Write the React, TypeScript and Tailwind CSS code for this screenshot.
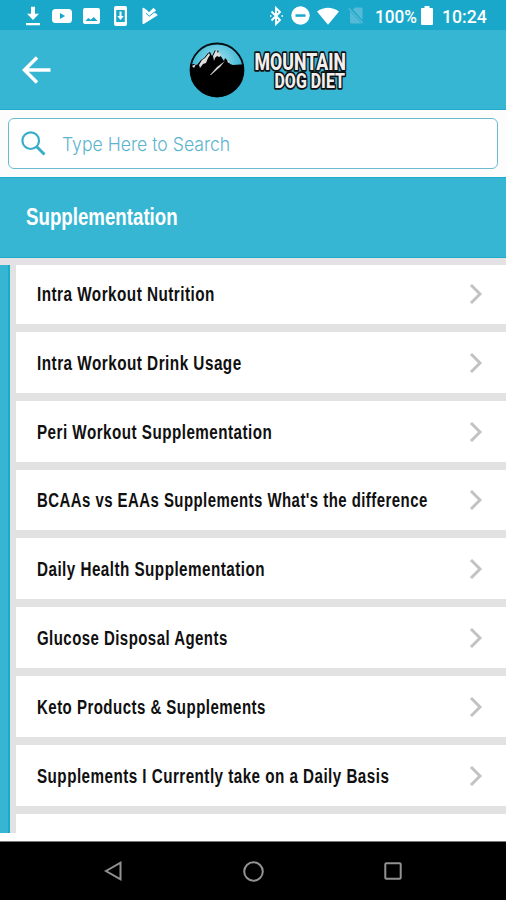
import { useLayoutEffect, useRef } from "react";

const topics = [
  { label: "Intra Workout Nutrition", width: 178 },
  { label: "Intra Workout Drink Usage", width: 205 },
  { label: "Peri Workout Supplementation", width: 235 },
  { label: "BCAAs vs EAAs Supplements What's the difference", width: 391 },
  { label: "Daily Health Supplementation", width: 228 },
  { label: "Glucose Disposal Agents", width: 190.5 },
  { label: "Keto Products & Supplements", width: 229 },
  { label: "Supplements I Currently take on a Daily Basis", width: 352.5 },
];

/** Text condensed or widened horizontally to a fixed width. */
function FitText({ text, width, className = "" }: { text: string; width: number; className?: string }) {
  const ref = useRef<HTMLSpanElement>(null);
  useLayoutEffect(() => {
    const el = ref.current;
    if (el) el.style.transform = `scaleX(${width / el.offsetWidth})`;
  }, [width, text]);
  return (
    <span className="block shrink-0" style={{ width }}>
      <span ref={ref} className={`inline-block origin-left whitespace-nowrap ${className}`}>
        {text}
      </span>
    </span>
  );
}

function StatusBar() {
  return (
    <div className="flex h-[30px] shrink-0 items-center bg-[#1aa8ca] pt-px text-white">
      <svg className="ml-[26px] h-5 w-[14px]" viewBox="0 0 14 20" fill="currentColor">
        <path d="M5 .8h4v7h4L7 14 1 7.800h4zM0 17h14v2.300H0z" />
      </svg>
      <svg className="ml-3 h-[14px] w-5" viewBox="0 0 20 14">
        <rect width="20" height="14" rx="3.500" fill="currentColor" />
        <path d="M8 4l5.200 3L8 10z" fill="#1aa8ca" />
      </svg>
      <svg className="ml-[11px] h-4 w-[17px]" viewBox="0 0 17 16">
        <rect width="17" height="16" rx="2" fill="currentColor" />
        <path d="M2.500 13l2.700-3 2.600 1.800 3-2.800 3.700 4z" fill="#1aa8ca" />
      </svg>
      <svg className="ml-[14px] h-5 w-[13px]" viewBox="0 0 13 20">
        <rect width="13" height="20" rx="2" fill="currentColor" />
        <path d="M2.200 4h8.600v12H2.200z" fill="#1aa8ca" />
        <path d="M5.500 5.500h2v4.500h2.300l-3.300 4-3.300-4h2.300z" fill="currentColor" />
      </svg>
      <svg className="ml-[15px] h-[18px] w-4" viewBox="0 0 16 18">
        <path d="M.5 1.500Q.5.200 2 1l3 2.200 2 2.100L11.500.8 14 3.200 11.800 6q4.500.7 3.500 2.500L2.200 16.800Q.5 17.500.5 16z" fill="currentColor" />
        <path d="M3.800 6l3.400 3.300L12.500 5" fill="none" stroke="#1aa8ca" strokeWidth="1" />
      </svg>
      <svg className="ml-[112px] h-5 w-[13px]" viewBox="0 0 13 20" fill="none" stroke="currentColor" strokeWidth="1.900">
        <path d="M1.500 5.500l8.500 8.500-4 4V2l4 4-8.500 8.500M.5 9.200v1.600M12.300 9.200v1.600" />
      </svg>
      <svg className="ml-2 h-[19px] w-[19px]" viewBox="0 0 19 19">
        <circle cx="9.500" cy="9.500" r="9.200" fill="currentColor" />
        <path d="M4.500 8.300h10v2.500h-10z" fill="#1aa8ca" />
      </svg>
      <svg className="ml-[7px] h-[18px] w-[22px]" viewBox="0 0 22 18" fill="currentColor">
        <path d="M0 4.500Q11-3 22 4.500L11 17.800z" />
      </svg>
      <svg className="ml-[9px] h-[17px] w-4" viewBox="0 0 16 17">
        <path d="M5 2.500L7 .5h6q1.500 0 1.500 1.500v11zM2 4.500L13.500 16.500h-10Q2 16.500 2 15z" fill="#55bad7" />
        <path d="M.8 1.500l14 14.500" stroke="#55bad7" strokeWidth="1.500" />
      </svg>
      <div className="ml-[11px] flex pt-[2px] font-['Roboto',sans-serif] text-[18px] leading-5 font-medium">
        <FitText text="100%" width={42} />
      </div>
      <svg className="ml-[4px] h-[19px] w-3" viewBox="0 0 12 19" fill="currentColor">
        <path d="M3.500 0h5v2H11q1 0 1 1v15q0 1-1 1H1q-1 0-1-1V3q0-1 1-1h2.500z" />
      </svg>
      <div className="ml-[9px] flex pt-[2px] font-['Roboto',sans-serif] text-[18px] leading-5 font-medium">
        <FitText text="10:24" width={45} />
      </div>
    </div>
  );
}

function Logo() {
  return (
    <svg className="ml-[138px] h-[60px] w-[162px]" viewBox="0 0 162 60">
      <defs>
        <clipPath id="badge">
          <circle cx="28" cy="30" r="27" />
        </clipPath>
        <radialGradient id="sky" cx=".5" cy=".35" r=".5">
          <stop offset="0" stopColor="#a6e2f0" />
          <stop offset="1" stopColor="#35b5d2" />
        </radialGradient>
      </defs>
      <circle cx="28" cy="30" r="26.500" fill="url(#sky)" stroke="#061014" strokeWidth="1.800" />
      <g clipPath="url(#badge)">
        <path d="M0 25l5-1 3 1 4-5 3-2 4-5 2-1 2 4 3-6 2 2 1-2 2 5 4 6 1-3 3 3 2 3 3 1 13-1v40H0z" fill="#000" />
        <path d="M3 26l4-2-2 4zM10 25l3-5 3-2 4-5 1 2-2 3-2 5-3 1-3 4zM24 16l3-6 2 3 1-2 2 5-2 1-2-1-2 2-1 3zM38 20l3 2-2 1z" fill="#ddd" />
        <path d="M21 35l7-8 8-6-5 6-9 8z" fill="#d3d3d3" />
      </g>
      <g
        fontFamily="Roboto, 'Liberation Sans', sans-serif"
        fontWeight="800"
        fill="#f0f0f0"
        stroke="#111"
        strokeWidth="3.600"
        strokeLinejoin="round"
        style={{ paintOrder: "stroke" }}
      >
        <text x="65.500" y="30.300" fontSize="23.500" textLength="91.500" lengthAdjust="spacingAndGlyphs">MOUNTAIN</text>
        <text x="85.500" y="48" fontSize="20.500" textLength="70.500" lengthAdjust="spacingAndGlyphs">DOG DIET</text>
      </g>
    </svg>
  );
}

function Chevron() {
  return (
    <svg className="h-5 w-[14px]" viewBox="0 0 14 20" fill="none" stroke="#c2c2c2" strokeWidth="2.900">
      <path d="M2 1l9 9-9 9" />
    </svg>
  );
}

export default function App() {
  return (
    <div className="flex h-[900px] w-[506px] flex-col overflow-hidden bg-white font-['Liberation_Sans',Arial,sans-serif]">
      <StatusBar />

      <header className="flex h-20 shrink-0 items-center border-b border-[#1fabc9] bg-[#37b6d3]">
        <svg className="ml-[22px] h-7 w-[29px]" viewBox="0 0 29 28" fill="none" stroke="#fff" strokeWidth="3.500">
          <path d="M15 1.500L2.500 14 15 26.500M3 14h25.500" />
        </svg>
        <Logo />
      </header>

      <div className="h-[67px] shrink-0 bg-[#fcfcfc] px-2 pt-2">
        <div className="flex h-[51px] items-center rounded-[6px] border-[1.5px] border-[#6abbd0] bg-white">
          <svg className="ml-3 h-[25px] w-[25px]" viewBox="0 0 25 25" fill="none" stroke="#37adc8" strokeWidth="2.200">
            <circle cx="9.700" cy="9.700" r="8.300" />
            <path d="M15.500 15.500l8 8" strokeWidth="3" />
          </svg>
          <div className="ml-4 pt-[3px] font-['Inter',sans-serif] text-[19px] leading-6 font-light text-[#5cb4cd]">
            <FitText text="Type Here to Search" width={168} />
          </div>
        </div>
      </div>

      <div className="flex h-[81px] shrink-0 items-center border-y border-[#1fabc9] bg-[#37b6d3] pl-[26px] text-[23px] font-bold text-white">
        <FitText text="Supplementation" width={152} />
      </div>

      <div className="h-[7px] shrink-0 bg-[#e4e2e4]" />

      <div className="flex h-[568px] shrink-0">
        <div className="w-[10px] border-r-2 border-[#17acca] bg-[#37b6d3]" />
        <div className="flex flex-1 flex-col gap-2 overflow-hidden bg-[#e2e2e2] pl-[6px]">
          {topics.map((t, i) => (
            <div
              key={t.label}
              className={`flex shrink-0 items-center justify-between bg-white pr-[23px] pl-[21px] ${i === 0 ? "h-[59px] pb-[2px]" : "h-[60.800px] pt-px"}`}
            >
              <div className="text-[19.500px] leading-6 font-bold tracking-[0.6px] text-[#101010]">
                <FitText text={t.label} width={t.width} />
              </div>
              <Chevron />
            </div>
          ))}
          <div className="h-[61px] shrink-0 bg-white" />
        </div>
      </div>

      <div className="h-2 shrink-0 bg-white" />

      <nav className="flex flex-1 items-center border-t border-[#777] bg-black">
        <svg className="ml-[104px] h-5 w-[18px]" viewBox="0 0 18 20" fill="none" stroke="#929292" strokeWidth="2">
          <path d="M2 10L16.500 1.700v16.600z" />
        </svg>
        <svg className="ml-[121px] h-[21px] w-[21px]" viewBox="0 0 21 21" fill="none" stroke="#929292" strokeWidth="2">
          <circle cx="10.500" cy="10.500" r="9.300" />
        </svg>
        <svg className="ml-[120px] h-[18px] w-[18px]" viewBox="0 0 18 18" fill="none" stroke="#929292" strokeWidth="2">
          <rect x="1.300" y="1.300" width="15.400" height="15.400" rx="1" />
        </svg>
      </nav>
    </div>
  );
}
